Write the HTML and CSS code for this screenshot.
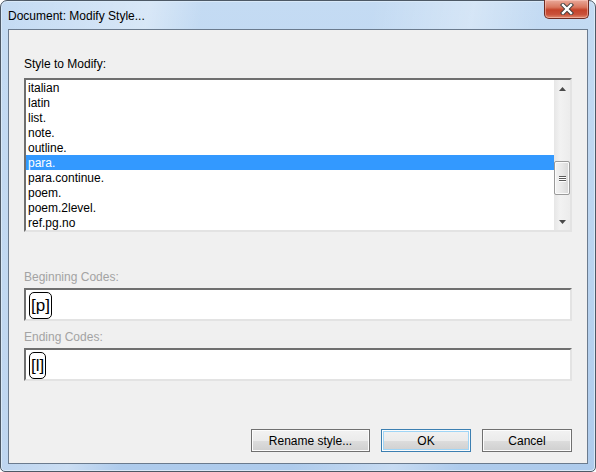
FILE: index.html
```html
<!DOCTYPE html>
<html>
<head>
<meta charset="utf-8">
<link rel="stylesheet" href="styles.css">
</head>
<body>
<div class="window">
  <div class="titlebar">
    <span class="title">Document: Modify Style...</span>
    <div class="close">
      <svg width="18" height="12" viewBox="0 0 18 12">
        <path d="M5 2 L13 10 M13 2 L5 10" stroke="#3c3c3c" stroke-width="4.2" stroke-linecap="square"/>
        <path d="M5 2 L13 10 M13 2 L5 10" stroke="#ffffff" stroke-width="2.4" stroke-linecap="square"/>
      </svg>
    </div>
  </div>
  <div class="client">
    <div class="label">Style to Modify:</div>
    <div class="listbox">
      <ul class="items">
        <li>italian</li>
        <li>latin</li>
        <li>list.</li>
        <li>note.</li>
        <li>outline.</li>
        <li class="sel">para.</li>
        <li>para.continue.</li>
        <li>poem.</li>
        <li>poem.2level.</li>
        <li>ref.pg.no</li>
      </ul>
      <div class="scrollbar">
        <div class="arrow">
          <svg width="7" height="4" viewBox="0 0 7 4"><path d="M3.5 0 L7 4 L0 4 Z" fill="#4a4a4a"/></svg>
        </div>
        <div class="track">
          <div class="thumb">
            <span class="grip"></span><span class="grip"></span><span class="grip"></span>
          </div>
        </div>
        <div class="arrow">
          <svg width="7" height="4" viewBox="0 0 7 4"><path d="M0 0 L7 0 L3.5 4 Z" fill="#4a4a4a"/></svg>
        </div>
      </div>
    </div>
    <div class="label disabled first-code">Beginning Codes:</div>
    <div class="edit"><span class="code wide">[p]</span></div>
    <div class="label disabled">Ending Codes:</div>
    <div class="edit"><span class="code">[l]</span></div>
    <div class="buttons">
      <button class="btn rename">Rename style...</button>
      <button class="btn ok">OK</button>
      <button class="btn cancel">Cancel</button>
    </div>
  </div>
</div>
</body>
</html>
```

FILE: styles.css
```css
html, body {
  margin: 0;
  padding: 0;
  background: #ffffff;
}

.window {
  box-sizing: border-box;
  width: 596px;
  height: 472px;
  border: 1px solid #4d5966;
  border-radius: 7px 7px 5px 5px;
  background:
    linear-gradient(100deg, rgba(255,255,255,0) 0%, rgba(255,255,255,0.35) 22%, rgba(255,255,255,0) 30%, rgba(255,255,255,0) 55%, rgba(255,255,255,0.3) 70%, rgba(255,255,255,0) 80%),
    linear-gradient(180deg, #c4dbf3 0%, #b9d3ef 60%, #aecbec 100%);
  box-shadow: inset 0 0 0 1px #d9e9f8;
  display: flex;
  flex-direction: column;
  font-family: "Liberation Sans", Arial, sans-serif;
}

.titlebar {
  height: 28px;
  display: flex;
  justify-content: space-between;
  align-items: flex-start;
}

.title {
  margin: 8px 0 0 7px;
  font-size: 12px;
  color: #000;
}

.close {
  box-sizing: border-box;
  width: 45px;
  height: 19px;
  margin-top: -1px;
  margin-right: 6px;
  border: 1px solid #6e2b22;
  border-top: none;
  border-radius: 0 0 5px 5px;
  background: linear-gradient(180deg, #e9a99a 0%, #d9775f 40%, #c4432a 55%, #c9513a 80%, #e08a6e 100%);
  box-shadow: inset 0 0 0 1px rgba(255, 210, 200, 0.5);
  display: flex;
  align-items: center;
  justify-content: center;
}

.client {
  box-sizing: border-box;
  margin: 0 7px 7px 7px;
  flex: 1;
  border: 1px solid #6b7b8e;
  background: #f0f0f0;
  padding: 27px 15px 0 15px;
  display: flex;
  flex-direction: column;
  font-size: 12px;
}

.label {
  height: 14px;
  line-height: 14px;
  color: #000;
}

.label.disabled {
  color: #a3a3a3;
  margin-top: 9px;
}

.label.first-code {
  margin-top: 38px;
}

.listbox {
  margin-top: 7px;
  height: 154px;
  box-sizing: border-box;
  border-style: solid;
  border-width: 2px;
  border-color: #6f6f6f #e3e3e3 #e3e3e3 #6f6f6f;
  background: #fff;
  display: flex;
}

.items {
  list-style: none;
  margin: 0;
  padding: 0;
  flex: 1;
}

.items li {
  height: 15px;
  line-height: 16px;
  padding-left: 2px;
  color: #000;
}

.items li.sel {
  background: #3399ff;
  color: #fff;
}

.scrollbar {
  width: 16px;
  background: linear-gradient(90deg, #e6e6e6, #f2f2f2 40%, #ececec);
  display: flex;
  flex-direction: column;
}

.arrow {
  height: 17px;
  display: flex;
  align-items: center;
  justify-content: center;
}

.track {
  flex: 1;
  position: relative;
}

.thumb {
  position: absolute;
  left: 0;
  right: 0;
  top: 64px;
  height: 34px;
  box-sizing: border-box;
  border: 1px solid #9a9a9a;
  border-radius: 2px;
  background: linear-gradient(90deg, #f3f3f3, #e8e8e8 50%, #d8d8d8);
  box-shadow: inset 0 0 0 1px #fbfbfb;
  display: flex;
  flex-direction: column;
  align-items: center;
  justify-content: center;
  gap: 1px;
}

.grip {
  display: block;
  width: 7px;
  height: 1px;
  background: #5a5a5a;
  box-shadow: 0 1px 0 #ffffff;
}

.edit {
  margin-top: 4px;
  height: 33px;
  box-sizing: border-box;
  border-style: solid;
  border-width: 2px;
  border-color: #6f6f6f #e3e3e3 #e3e3e3 #6f6f6f;
  background: #fff;
  padding: 2px 0 0 3px;
}

.code {
  box-sizing: border-box;
  display: inline-block;
  height: 27px;
  line-height: 25px;
  padding: 0 1px;
  border: 1.5px solid #000;
  border-radius: 5px;
  font-size: 17px;
  color: #000;
}

.buttons {
  margin-top: 48px;
  display: flex;
  justify-content: flex-end;
  gap: 11px;
}

.btn {
  box-sizing: border-box;
  height: 23px;
  border: 1px solid #707070;
  border-radius: 0;
  background: linear-gradient(180deg, #f2f2f2 0%, #ebebeb 50%, #dddddd 51%, #cfcfcf 100%);
  box-shadow: inset 0 0 0 1px #fcfcfc;
  font-family: "Liberation Sans", Arial, sans-serif;
  font-size: 12px;
  color: #000;
  padding: 0;
}

.btn.rename { width: 119px; }
.btn.ok { width: 90px; border-color: #3c7fb1; box-shadow: inset 0 0 0 1px #fcfcfc, inset 0 0 0 2px #9fd5f6; }
.btn.cancel { width: 90px; }
```
